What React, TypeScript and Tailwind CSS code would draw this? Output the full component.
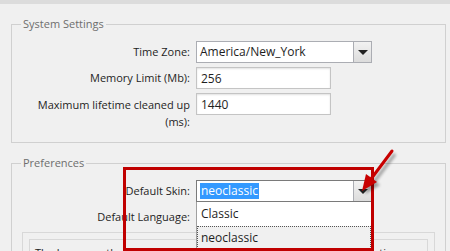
import React from 'react';

const Select = ({ value, focused }: { value: string; focused?: boolean }) => (
  <div className={`flex h-[22px] w-[176px] border bg-white text-[12px] ${focused ? 'border-[#7a7a7a]' : 'border-[#abadb3]'}`}>
    <div className="flex flex-1 items-center pl-[3px] leading-[16px]">
      {focused ? <span className="bg-[#3399ff] px-[1px] text-white">{value}</span> : <span>{value}</span>}
    </div>
    <div className="flex w-[18px] items-center justify-center border-l border-[#abadb3] bg-gradient-to-b from-[#f2f2f2] to-[#dcdcdc]">
      <div className="h-0 w-0 border-x-[5px] border-t-[5px] border-x-transparent border-t-[#222]" />
    </div>
  </div>
);

const Input = ({ value }: { value: string }) => (
  <div className="flex h-[22px] w-[135px] items-center border border-[#c4c4c4] bg-white pl-[4px] text-[12px] leading-[17px] shadow-[inset_0_1px_2px_rgba(0,0,0,0.12)]">
    {value}
  </div>
);

export default function App() {
  return (
    <div className="relative h-[251px] w-[450px] overflow-hidden bg-[#f0f0f0] font-['Open_Sans',sans-serif] text-[11px] text-[#1e1e1e]">
      <div className="h-1 bg-[#dcdcdc]" />

      {/* System settings */}
      <fieldset className="ml-[11px] mt-[11px] w-[435px] border border-[#d0d0d0] pb-[12px] pt-[8px]">
        <legend className="ml-[9px] px-[2px] leading-[18px] text-[#6e6e6e]">System Settings</legend>
        <div className="flex flex-col gap-[4px]">
          <div className="flex items-center gap-[6px]">
            <span className="w-[178px] text-right">Time Zone:</span>
            <Select value="America/New_York" />
          </div>
          <div className="flex items-center gap-[6px]">
            <span className="w-[178px] text-right">Memory Limit (Mb):</span>
            <Input value="256" />
          </div>
          <div className="flex items-start gap-[6px]">
            <span className="w-[178px] pt-[3px] text-right leading-[17px]">
              Maximum lifetime cleaned up<br />(ms):
            </span>
            <Input value="1440" />
          </div>
        </div>
      </fieldset>

      {/* Preferences */}
      <fieldset className="ml-[11px] mt-[11px] w-[435px] border border-[#d0d0d0] pt-[8px]">
        <legend className="ml-[9px] px-[2px] leading-[18px] text-[#6e6e6e]">Preferences</legend>
        <div className="flex flex-col gap-[4px]">
          <div className="flex items-center gap-[6px]">
            <span className="w-[178px] text-right">Default Skin:</span>
            <div className="relative z-10">
              <Select value="neoclassic" focused />
              <div className="absolute left-0 top-full w-[176px] border-x border-[#a0a0a0] bg-white text-[12px]">
                <div className="flex h-[24px] items-center pl-[4px]">Classic</div>
                <div className="flex h-[23px] items-center border border-dotted border-[#555] bg-[#f0f0f0] pl-[3px]">neoclassic</div>
              </div>
            </div>
          </div>
          <div className="flex items-center gap-[6px]">
            <span className="w-[178px] text-right">Default Language:</span>
            <Select value="English" />
          </div>
        </div>
        <div className="mx-[10px] mt-[4px] border border-[#d8d8d8] p-[6px]">
          <div className="border border-[#d8d8d8] px-[5px] pb-[20px] pt-[4px]">
            <p className="whitespace-nowrap leading-[17px]">
              The language that will be used by default for the administration section.
            </p>
          </div>
        </div>
      </fieldset>

      {/* annotation */}
      <div className="absolute left-[123px] top-[167px] z-20 h-[84px] w-[251px] border-[3px] border-[#c00000]" />
      <svg className="absolute left-[345px] top-[140px] z-30" width="60" height="60" viewBox="0 0 60 60">
        <defs>
          <filter id="sh" x="-50%" y="-50%" width="200%" height="200%">
            <feGaussianBlur stdDeviation="1.8" />
          </filter>
        </defs>
        <g transform="translate(3 3)" fill="#000" stroke="#000" opacity="0.35" filter="url(#sh)">
          <line x1="47" y1="11" x2="26" y2="39" strokeWidth="3" />
          <polygon points="17,51 32,42 21,34" strokeWidth="0" />
        </g>
        <line x1="47" y1="11" x2="26" y2="39" stroke="#c80000" strokeWidth="3" strokeLinecap="round" />
        <polygon points="17,51 32,42 21,34" fill="#c80000" />
      </svg>
    </div>
  );
}
